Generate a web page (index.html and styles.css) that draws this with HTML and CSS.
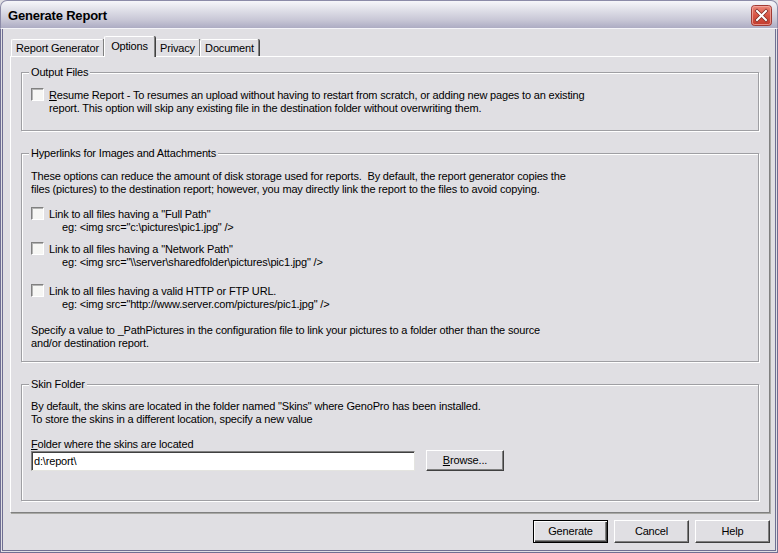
FILE: index.html
```html
<!DOCTYPE html>
<html>
<head>
<meta charset="utf-8">
<title>Generate Report</title>
<link rel="stylesheet" href="styles.css">
</head>
<body>
<div class="window">
  <div class="titlebar">
    <span class="title">Generate Report</span>
    <span class="close">
      <svg width="21" height="21" viewBox="0 0 21 21">
        <defs>
          <linearGradient id="cg" x1="0" y1="0" x2="0" y2="1">
            <stop offset="0" stop-color="#ec8a7c"/>
            <stop offset="0.5" stop-color="#d85444"/>
            <stop offset="1" stop-color="#c23a2c"/>
          </linearGradient>
        </defs>
        <rect x="0.5" y="0.5" width="20" height="20" rx="3" fill="url(#cg)" stroke="#a03a34"/>
        <rect x="1.5" y="1.5" width="18" height="18" rx="2" fill="none" stroke="#f4b4ac" stroke-opacity="0.7"/>
        <path d="M6 6 L15 15 M15 6 L6 15" stroke="#7a2a24" stroke-width="3.4" stroke-linecap="square"/>
        <path d="M6 6 L15 15 M15 6 L6 15" stroke="#ffffff" stroke-width="2" stroke-linecap="square"/>
      </svg>
    </span>
  </div>
  <div class="frame">
    <div class="tabs">
      <div class="tab tab-rg">Report Generator</div>
      <div class="tab tab-opt active">Options</div>
      <div class="tab tab-priv">Privacy</div>
      <div class="tab tab-doc">Document</div>
    </div>
    <div class="panel">
      <div class="group g1">
        <div class="legend">Output Files</div>
        <div class="check-row">
          <span class="cb"></span>
          <div class="label"><u>R</u>esume Report - To resumes an upload without having to restart from scratch, or adding new pages to an existing<br>report. This option will skip any existing file in the destination folder without overwriting them.</div>
        </div>
      </div>

      <div class="group g2">
        <div class="legend">Hyperlinks for Images and Attachments</div>
        <p class="para p-intro">These options can reduce the amount of disk storage used for reports.&nbsp; By default, the report generator copies the<br>files (pictures) to the destination report; however, you may directly link the report to the files to avoid copying.</p>
        <div class="check-row cr1">
          <span class="cb"></span>
          <div class="label">Link to all files having a "Full Path"<br><span class="eg">eg: &lt;img src="c:\pictures\pic1.jpg" /&gt;</span></div>
        </div>
        <div class="check-row cr2">
          <span class="cb"></span>
          <div class="label">Link to all files having a "Network Path"<br><span class="eg">eg: &lt;img src="\\server\sharedfolder\pictures\pic1.jpg" /&gt;</span></div>
        </div>
        <div class="check-row cr3">
          <span class="cb"></span>
          <div class="label">Link to all files having a valid HTTP or FTP URL.<br><span class="eg">eg: &lt;img src="http://www.server.com/pictures/pic1.jpg" /&gt;</span></div>
        </div>
        <p class="para p-specify">Specify a value to _PathPictures in the configuration file to link your pictures to a folder other than the source<br>and/or destination report.</p>
      </div>

      <div class="group g3">
        <div class="legend">Skin Folder</div>
        <p class="para">By default, the skins are located in the folder named "Skins" where GenoPro has been installed.<br>To store the skins in a different location, specify a new value</p>
        <p class="para p-folder"><u>F</u>older where the skins are located</p>
        <div class="folder-row">
          <div class="input">d:\report\</div>
          <div class="btn btn-browse"><u>B</u>rowse...</div>
        </div>
      </div>
    </div>
    <div class="buttons">
      <div class="btn btn-default">Generate</div>
      <div class="btn">Cancel</div>
      <div class="btn">Help</div>
    </div>
  </div>
</div>
</body>
</html>
```

FILE: styles.css
```css
* { box-sizing: border-box; }
html, body { margin: 0; padding: 0; }
body {
  width: 778px;
  height: 553px;
  overflow: hidden;
  background: #ffffff;
  font-family: "Liberation Sans", Arial, sans-serif;
  font-size: 11px;
  letter-spacing: -0.17px;
  color: #000;
}
u { text-decoration: underline; text-underline-offset: 1px; }

.window {
  width: 778px;
  height: 553px;
  display: flex;
  flex-direction: column;
  background: #e0dfe3;
}

.titlebar {
  height: 29px;
  flex: none;
  display: flex;
  align-items: center;
  justify-content: space-between;
  padding: 0 5px 0 7px;
  border: 1px solid #8c8ba8;
  border-bottom: 1px solid #f4f4f8;
  border-radius: 7px 7px 0 0;
  background: linear-gradient(#f6f6fa 0%, #e2e2ea 30%, #c8c7d6 70%, #adacc3 100%);
}
.title {
  font-weight: bold;
  font-size: 13px;
  color: #000;
  letter-spacing: -0.2px;
  margin-top: 1px;
}
.close { display: flex; width: 21px; height: 21px; margin-top: 1px; }

.frame {
  flex: 1;
  display: flex;
  flex-direction: column;
  border: 3px double #6f6e92;
  border-top: 0;
  padding: 0 5px 0 7px;
}

.tabs {
  height: 27px;
  flex: none;
  display: flex;
  align-items: flex-end;
  padding-left: 1px;
}
.tab {
  height: 17px;
  padding-top: 2px;
  text-align: center;
  background: #e0dfe3;
  border-top: 1px solid #ffffff;
  border-left: 1px solid #ffffff;
  border-right: 1px solid #808080;
  box-shadow: 1px 0 0 #404040;
  border-radius: 2px 2px 0 0;
  white-space: nowrap;
}
.tab-rg { width: 93px; }
.tab-opt { width: 51px; }
.tab-priv { width: 45px; }
.tab-doc { width: 59px; }
.tab.active {
  height: 21px;
  margin-bottom: -1px;
  padding-top: 3px;
  position: relative;
  z-index: 1;
}

.panel {
  height: 457px;
  flex: none;
  border-top: 1px solid #ffffff;
  border-left: 1px solid #ffffff;
  border-right: 1px solid #808080;
  border-bottom: 1px solid #808080;
  box-shadow: 1px 1px 0 #a8a8a4;
  padding: 15px 10px 0 10px;
}

.group {
  position: relative;
  border: 1px solid #9f9fa3;
  box-shadow: 1px 1px 0 #ffffff, inset 1px 1px 0 #ffffff;
  padding-left: 9px;
}
.g1 { height: 59px; padding-top: 16px; }
.g2 { height: 209px; margin-top: 22px; padding-top: 16px; }
.g3 { height: 117px; margin-top: 22px; padding-top: 15px; }

.legend {
  position: absolute;
  top: -7px;
  left: 7px;
  padding: 0 2px 0 2px;
  line-height: 13px;
  background: #e0dfe3;
}

.check-row {
  display: flex;
  align-items: flex-start;
  line-height: 13px;
}
.cb {
  flex: none;
  width: 13px;
  height: 13px;
  margin-top: -1px;
  margin-right: 5px;
  background: #f6f6f4;
  border-top: 1px solid #808080;
  border-left: 1px solid #808080;
  border-right: 1px solid #ffffff;
  border-bottom: 1px solid #ffffff;
  box-shadow: inset 1px 1px 0 #b4b4b4;
}
.label { white-space: nowrap; }
.eg { display: inline-block; padding-left: 13px; }

.para {
  margin: 0;
  line-height: 13px;
  white-space: nowrap;
}
.cr1 { margin-top: 12px; }
.cr2 { margin-top: 9px; }
.cr3 { margin-top: 16px; }
.p-specify { margin-top: 13px; }
.p-folder { margin-top: 12px; }

.folder-row {
  display: flex;
  align-items: flex-start;
  margin-top: -1px;
}
.input {
  width: 384px;
  height: 20px;
  margin-top: 1px;
  padding: 3px 0 0 2px;
  background: #ffffff;
  border-top: 1px solid #808080;
  border-left: 1px solid #808080;
  border-right: 1px solid #e4e4e0;
  border-bottom: 1px solid #e4e4e0;
  box-shadow: inset 1px 1px 0 #404040;
  line-height: 13px;
}

.btn {
  width: 75px;
  height: 23px;
  display: flex;
  align-items: center;
  justify-content: center;
  background: #e0dfe3;
  border-top: 1px solid #ffffff;
  border-left: 1px solid #ffffff;
  border-right: 1px solid #404040;
  border-bottom: 1px solid #404040;
  box-shadow: inset -1px -1px 0 #808080;
  padding-bottom: 1px;
}
.btn-browse {
  width: 78px;
  height: 21px;
  margin-left: 11px;
}

.buttons {
  display: flex;
  justify-content: flex-end;
  gap: 6px;
  margin-top: 7px;
}
.btn-default {
  border: 1px solid #000000;
  box-shadow: inset 1px 1px 0 #ffffff, inset -1px -1px 0 #404040, inset -2px -2px 0 #808080;
}
```
